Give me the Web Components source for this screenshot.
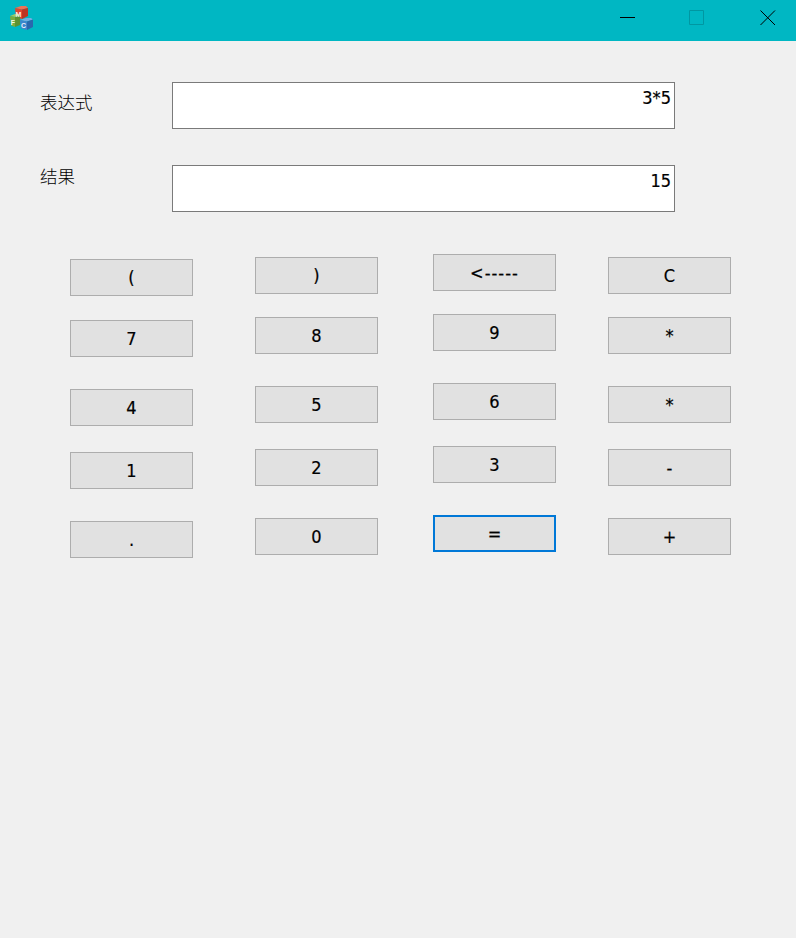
<!DOCTYPE html>
<html>
<head>
<meta charset="utf-8">
<title>calc</title>
<style>
    html, body {
        margin: 0;
        height: 100%;
        background: #f0f0f0;
    }
    .c1 { margin-left: 70px; margin-top: 5px; }
    .c2 { margin-left: 62px; margin-top: 3px; }
    .c3 { margin-left: 55px; }
    .c4 { margin-left: 52px; margin-top: 3px; }
    .c1 calc-key:nth-child(2) { margin-top: 24px; }
    calc-key:nth-child(2) { margin-top: 23px; }
    calc-key:nth-child(3) { margin-top: 32px; }
    calc-key:nth-child(4) { margin-top: 26px; }
    calc-key:nth-child(5) { margin-top: 32px; }
</style>
</head>
<body>
<calc-window>
    <calc-field label="表达式" value="3*5" style="--label-top: 9px"></calc-field>
    <calc-field label="结果" value="15" style="--label-top: 0px; margin-top: 36px"></calc-field>
    <calc-keypad>
        <calc-column class="c1">
            <calc-key>(</calc-key><calc-key>7</calc-key><calc-key>4</calc-key><calc-key>1</calc-key><calc-key>.</calc-key>
        </calc-column>
        <calc-column class="c2">
            <calc-key>)</calc-key><calc-key>8</calc-key><calc-key>5</calc-key><calc-key>2</calc-key><calc-key>0</calc-key>
        </calc-column>
        <calc-column class="c3">
            <calc-key style="letter-spacing: 1px">&lt;-----</calc-key><calc-key>9</calc-key><calc-key>6</calc-key><calc-key>3</calc-key><calc-key focused>=</calc-key>
        </calc-column>
        <calc-column class="c4">
            <calc-key>C</calc-key><calc-key>*</calc-key><calc-key>*</calc-key><calc-key>-</calc-key><calc-key>+</calc-key>
        </calc-column>
    </calc-keypad>
</calc-window>

<script>
const latin = '"DejaVu Sans Condensed", "DejaVu Sans", sans-serif';

const titlebarTemplate = document.createElement('template');
titlebarTemplate.innerHTML = `
    <style>
        :host {
            display: flex;
            align-items: center;
            height: 41px;
            background: #00b7c3;
        }
        .logo {
            display: block;
            margin-left: 8px;
            margin-bottom: 7px;
        }
        .logo text {
            font: bold 7px "Liberation Sans", sans-serif;
            fill: #fff;
            fill-opacity: .9;
            text-anchor: middle;
        }
        .controls {
            display: flex;
            margin-left: auto;
        }
        .controls svg {
            display: block;
            width: 16px;
            height: 16px;
            margin-bottom: 5px;
        }
        .min { margin-right: 53px; }
        .max { margin-right: 55px; }
        .close { margin-right: 20px; }
    </style>
    <svg class="logo" width="26" height="26" viewBox="0 0 26 26">
        <path d="M7 4L13 2h5l2 2-6 1.500z" fill="#ee7355"/>
        <path d="M7 4l7 1.500V15l-6-1.500z" fill="#e0452f"/>
        <path d="M14 5.500L20 4v8l-6 3z" fill="#bd3522"/>
        <path d="M2 12l5-2h3l2 1-5 2z" fill="#a3c964"/>
        <path d="M2 12l5 1v10l-4-1.500z" fill="#78ae40"/>
        <path d="M7 13l5-2v10l-5 2z" fill="#5c9232"/>
        <path d="M12 16l6-2h5l2 1.500-6 2z" fill="#73aee2"/>
        <path d="M12 16l7 1.500V26l-6-1.500z" fill="#3c86cc"/>
        <path d="M19 17.500l6-2V23l-6 3z" fill="#2a68ad"/>
        <text x="10.500" y="13">M</text>
        <text x="5" y="20.500">F</text>
        <text x="15.500" y="24">C</text>
    </svg>
    <div class="controls">
        <svg class="min" viewBox="0 0 16 16"><path d="M0 7.500h15" stroke="#000" fill="none"/></svg>
        <svg class="max" viewBox="0 0 16 16"><path d="M.5 .5h14v14h-14z" stroke="#0097a2" fill="none"/></svg>
        <svg class="close" viewBox="0 0 16 16"><path d="M.5 .5l14.500 14.500M15 .5L.5 15" stroke="#000" fill="none"/></svg>
    </div>
`;

class CalcTitlebar extends HTMLElement {
    constructor () {
        super();
        this.attachShadow({ mode: 'open' }).appendChild(titlebarTemplate.content.cloneNode(true));
    }
}
customElements.define('calc-titlebar', CalcTitlebar);

const windowTemplate = document.createElement('template');
windowTemplate.innerHTML = `
    <style>
        :host {
            display: block;
            width: 796px;
            height: 938px;
            background: #f0f0f0;
            overflow: hidden;
        }
        .content {
            display: flex;
            flex-direction: column;
            padding-top: 41px;
        }
    </style>
    <calc-titlebar></calc-titlebar>
    <div class="content"><slot></slot></div>
`;

class CalcWindow extends HTMLElement {
    constructor () {
        super();
        this.attachShadow({ mode: 'open' }).appendChild(windowTemplate.content.cloneNode(true));
    }
}
customElements.define('calc-window', CalcWindow);

const fieldTemplate = document.createElement('template');
fieldTemplate.innerHTML = `
    <style>
        :host {
            display: flex;
            padding-left: 40px;
        }
        .label {
            width: 132px;
            padding-top: var(--label-top, 0);
            font: 300 17.500px/22px "Noto Sans CJK SC", sans-serif;
            color: #000;
        }
        .box {
            box-sizing: border-box;
            width: 503px;
            height: 47px;
            padding: 3px 3px 0 0;
            border: 1px solid #7a7a7a;
            background: #fff;
            text-align: right;
            font: 18px/23px ${latin};
            -webkit-text-stroke: .2px #000;
            color: #000;
        }
    </style>
    <div class="label"></div>
    <div class="box"></div>
`;

class CalcField extends HTMLElement {
    constructor () {
        super();
        this.attachShadow({ mode: 'open' }).appendChild(fieldTemplate.content.cloneNode(true));
        this.shadowRoot.querySelector('.label').textContent = this.getAttribute('label');
        this.shadowRoot.querySelector('.box').textContent = this.getAttribute('value');
    }
}
customElements.define('calc-field', CalcField);

const keypadTemplate = document.createElement('template');
keypadTemplate.innerHTML = `
    <style>
        :host {
            display: flex;
            margin-top: 42px;
        }
    </style>
    <slot></slot>
`;

class CalcKeypad extends HTMLElement {
    constructor () {
        super();
        this.attachShadow({ mode: 'open' }).appendChild(keypadTemplate.content.cloneNode(true));
    }
}
customElements.define('calc-keypad', CalcKeypad);

const columnTemplate = document.createElement('template');
columnTemplate.innerHTML = `
    <style>
        :host {
            display: flex;
            flex-direction: column;
            width: 123px;
        }
    </style>
    <slot></slot>
`;

class CalcColumn extends HTMLElement {
    constructor () {
        super();
        this.attachShadow({ mode: 'open' }).appendChild(columnTemplate.content.cloneNode(true));
    }
}
customElements.define('calc-column', CalcColumn);

const keyTemplate = document.createElement('template');
keyTemplate.innerHTML = `
    <style>
        :host {
            display: flex;
            align-items: center;
            justify-content: center;
            box-sizing: border-box;
            height: 37px;
            border: 1px solid #adadad;
            background: #e1e1e1;
            font: 18px/1 ${latin};
            -webkit-text-stroke: .2px #000;
            color: #000;
        }
        :host([focused]) {
            border: 2px solid #0078d7;
        }
    </style>
    <slot></slot>
`;

class CalcKey extends HTMLElement {
    constructor () {
        super();
        this.attachShadow({ mode: 'open' }).appendChild(keyTemplate.content.cloneNode(true));
    }
}
customElements.define('calc-key', CalcKey);
</script>
</body>
</html>
